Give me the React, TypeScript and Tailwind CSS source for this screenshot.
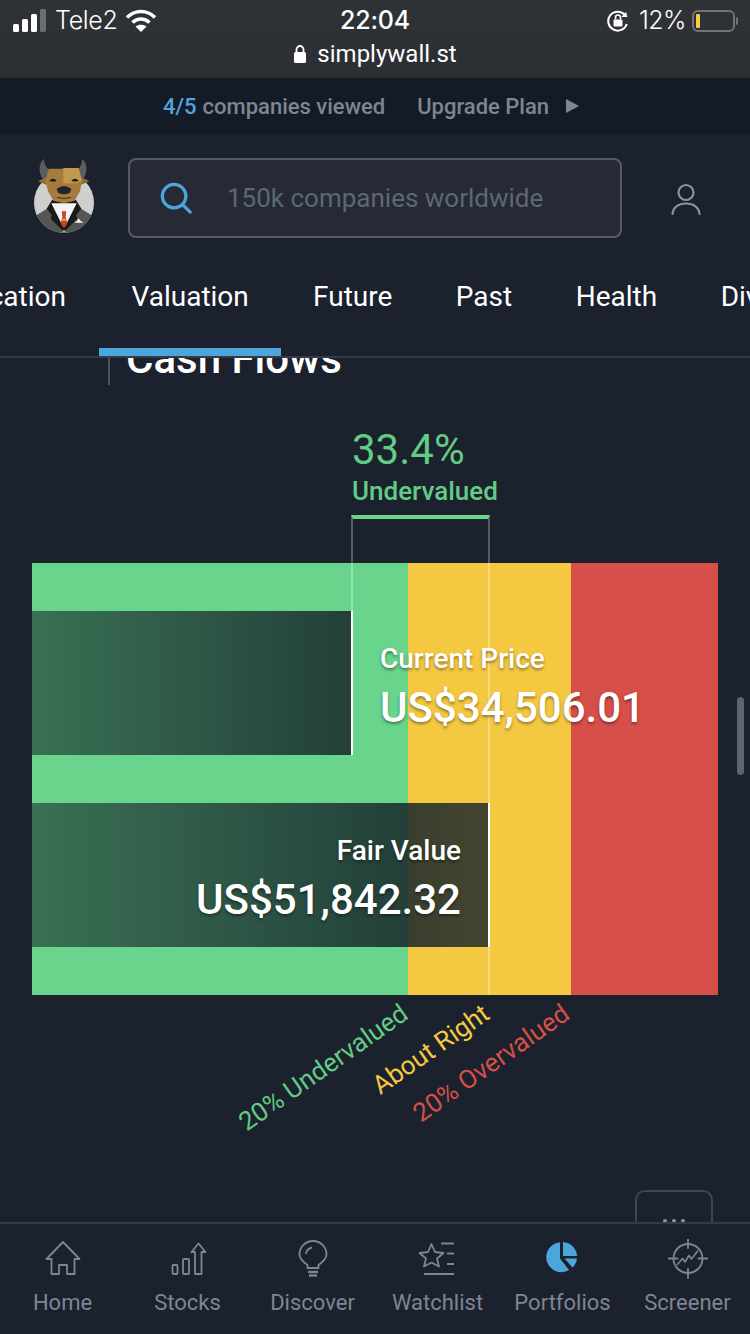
import type { ReactNode } from 'react'

const tabs = ['Valuation', 'Future', 'Past', 'Health', 'Dividend']

function BullLogo() {
  return (
    <svg viewBox="0 0 270 270" className="w-[90px] h-[90px] shrink-0">
      <defs>
        <clipPath id="disc">
          <circle cx="132" cy="158" r="90" />
        </clipPath>
      </defs>
      <circle cx="132" cy="158" r="90" fill="#cfcfcf" />
      <g clipPath="url(#disc)">
        <path d="M30 260 V208 L88 172 H176 L234 208 V260 Z" fill="#555555" />
        <path d="M96 150 L80 176 L96 196 L92 206 L130 244 L134 244 L172 206 L168 196 L184 176 L168 150 Z" fill="#1a1a1a" />
        <path d="M94 160 H170 L136 228 H128 Z" fill="#f4f4f4" />
        <path d="M125 184 H139 L137 200 L142 220 L132 234 L122 220 L127 200 Z" fill="#c8452b" />
        <path d="M126 206 H138 L139 212 H125 Z" fill="#e8a33a" />
        <path d="M163 218 L170 213 L176 205 L182 213 L192 218 Z" fill="#f2f2f2" />
        <circle cx="132" cy="244" r="4" fill="#a0a0a0" />
      </g>
      <path d="M72 26 C54 42 54 70 72 90 L92 62 C80 54 72 44 72 26 Z" fill="#5a5e62" />
      <path d="M186 26 C204 42 204 70 186 90 L168 62 C180 54 186 44 186 26 Z" fill="#5a5e62" />
      <path d="M54 94 L84 78 L92 110 Z" fill="#8f6c33" />
      <path d="M208 94 L178 78 L170 110 Z" fill="#8f6c33" />
      <path d="M86 56 H176 L186 92 L180 124 L164 152 L132 160 L100 152 L84 124 L76 92 Z" fill="#a47c3d" />
      <path d="M130 54 H176 L186 92 L168 100 H130 Z" fill="#c19a50" />
      <path d="M88 92 Q99 80 110 92 Q99 97 88 92 Z" fill="#1d1a16" />
      <path d="M154 92 Q165 80 176 92 Q165 97 154 92 Z" fill="#1d1a16" />
      <path d="M110 116 Q132 100 154 116 L150 128 Q132 138 114 128 Z" fill="#22242a" />
      <path d="M112 142 Q132 150 152 142" fill="none" stroke="#3a2a12" strokeWidth="3" />
    </svg>
  )
}

function SignalBars() {
  return (
    <svg width="36" height="24" viewBox="0 0 36 24">
      <rect x="0" y="15" width="6" height="8" rx="1.5" fill="#fff" />
      <rect x="9" y="10" width="6" height="13" rx="1.5" fill="#fff" />
      <rect x="18" y="5" width="6" height="18" rx="1.5" fill="#fff" />
      <rect x="27" y="0" width="6" height="23" rx="1.5" fill="#6a6d72" />
    </svg>
  )
}

function WifiGlyph() {
  return (
    <svg width="32" height="24" viewBox="0 0 32 24" fill="none" stroke="#fff" strokeWidth="3.6">
      <path d="M2 8.5 C10 0.5 22 0.5 30 8.5" />
      <path d="M7.5 13.5 C12.5 8.8 19.5 8.8 24.5 13.5" />
      <path d="M16 23 L10.5 17.5 C13.5 15 18.5 15 21.5 17.5 Z" fill="#fff" stroke="none" />
    </svg>
  )
}

function RotationLock() {
  return (
    <svg width="22" height="24" viewBox="0 0 22 24" fill="none">
      <path d="M18 6 A9.5 9.5 0 1 0 19.8 15" stroke="#fff" strokeWidth="2" />
      <path d="M20.5 8 L14.5 8 L19 3 Z" fill="#fff" />
      <rect x="6.5" y="10.5" width="9" height="7" rx="1" fill="#fff" />
      <path d="M8.5 10.5 V8.5 A2.5 2.5 0 0 1 13.5 8.5 V10.5" stroke="#fff" strokeWidth="1.6" />
    </svg>
  )
}

function Battery() {
  return (
    <div className="flex items-center gap-[1px]">
      <div className="w-[43px] h-[22px] rounded-[6px] border-2 border-[#70747a] p-[2px]">
        <div className="w-[4px] h-full rounded-[1px] bg-[#f5d13f]" />
      </div>
      <div className="w-[2px] h-[8px] rounded-r-full bg-[#70747a]" />
    </div>
  )
}

function LockGlyph() {
  return (
    <svg width="14" height="20" viewBox="0 0 14 20" fill="none">
      <rect x="1" y="8" width="12" height="11" rx="1.5" fill="#fff" />
      <path d="M3.5 8 V5.5 A3.5 3.5 0 0 1 10.5 5.5 V8" stroke="#fff" strokeWidth="1.8" />
    </svg>
  )
}

function SearchGlyph() {
  return (
    <svg width="34" height="34" viewBox="0 0 36 36" fill="none" stroke="#4ca6dc" strokeWidth="3.4" strokeLinecap="round">
      <circle cx="16" cy="16" r="12.5" />
      <path d="M25.5 25.5 L33 33" />
    </svg>
  )
}

function PersonGlyph() {
  return (
    <svg width="32" height="34" viewBox="0 0 32 34" fill="none" stroke="#8c929e" strokeWidth="2.2" strokeLinecap="round">
      <circle cx="16" cy="9.5" r="7.5" />
      <path d="M2.5 31 C3 24 9 20.5 16 20.5 C23 20.5 29 24 29.5 31" />
    </svg>
  )
}

const stroke = '#7e8694'

function NavIcon({ children }: { children: ReactNode }) {
  return (
    <svg width="40" height="40" viewBox="0 0 40 40" fill="none" stroke={stroke} strokeWidth="1.8" strokeLinejoin="round">
      {children}
    </svg>
  )
}

const navItems: { label: string; icon: ReactNode }[] = [
  {
    label: 'Home',
    icon: (
      <NavIcon>
        <path d="M20 3 L3.5 20 H8.5 V35 H16 V26 H24 V35 H31.5 V20 H36.5 Z" />
      </NavIcon>
    ),
  },
  {
    label: 'Stocks',
    icon: (
      <NavIcon>
        <rect x="4.5" y="26" width="5" height="9" rx="1" />
        <rect x="15" y="20" width="6" height="15" rx="1" />
        <path d="M27 35 V13 H23.5 L30.5 4.5 L37.5 13 H33.5 V35 Z" />
      </NavIcon>
    ),
  },
  {
    label: 'Discover',
    icon: (
      <NavIcon>
        <path d="M14.5 29 V26 C11 23.5 6.5 20 6.5 15.5 A13.5 13.5 0 0 1 33.5 15.5 C33.5 20 29 23.5 25.5 26 V29 Z" />
        <path d="M13 15 A7.5 7.5 0 0 1 19 8.5" />
        <path d="M15 33 H25" strokeWidth="2.4" />
        <path d="M16 36.5 H24" strokeWidth="2.4" />
      </NavIcon>
    ),
  },
  {
    label: 'Watchlist',
    icon: (
      <NavIcon>
        <path d="M13.5 5 L17 13 L25.5 14 L19 19.5 L21 27.5 L13.5 23.5 L6 27.5 L8 19.5 L1.5 14 L10 13 Z" />
        <path d="M23 4.5 H36 M29 14.5 H36 M29 25 H36 M6 35 H36" />
      </NavIcon>
    ),
  },
  {
    label: 'Portfolios',
    icon: (
      <svg width="40" height="40" viewBox="0 0 40 40" fill="#4ca6dc">
        <path d="M17 3.2 V19.5 L26 31 A15 15 0 1 1 17 3.2 Z" />
        <path d="M20 3 A15 15 0 0 1 34 17 H20 Z" />
        <path d="M21.5 19.5 H34 A15 15 0 0 1 29.5 28.5 Z" />
      </svg>
    ),
  },
  {
    label: 'Screener',
    icon: (
      <NavIcon>
        <circle cx="20" cy="19.5" r="14.5" />
        <path d="M20 0 V9 M20 30 V39 M0.5 19.5 H9.5 M30.5 19.5 H39.5" strokeLinecap="round" />
        <path d="M9 26 L14.5 19.5 L17 23 L21 16.5 L23.5 20 L30 11.5" strokeWidth="1.6" />
      </NavIcon>
    ),
  },
]

export default function App() {
  return (
    <div className="relative w-[750px] h-[1334px] overflow-hidden flex flex-col bg-[#1b212d] font-['Roboto',sans-serif]">
      {/* ios status + address */}
      <div className="h-[78px] shrink-0 bg-gradient-to-b from-[#2f3236] to-[#2b2f34] text-white">
        <div className="relative flex items-center justify-between h-[41px] pl-[13px] pr-[12px]">
          <div className="flex items-center gap-[6px]">
            <SignalBars />
            <span className="text-[25px] font-['Inter',sans-serif] font-light tracking-[-0.3px]">Tele2</span>
            <span className="ml-[1px]"><WifiGlyph /></span>
          </div>
          <span className="absolute left-0 right-0 text-center text-[25px] font-medium font-['Inter',sans-serif] tracking-[-0.2px]">22:04</span>
          <div className="flex items-center gap-[6px]">
            <RotationLock />
            <span className="ml-[4px] text-[25px] font-['Inter',sans-serif] font-light tracking-[-0.5px]">12%</span>
            <Battery />
          </div>
        </div>
        <div className="flex items-center justify-center gap-[10px] h-[26px] text-[24px]">
          <LockGlyph />
          <span>simplywall.st</span>
        </div>
      </div>

      {/* upgrade banner */}
      <div className="h-[56px] shrink-0 flex items-center justify-center bg-[#151b26] text-[22px] font-medium text-[#7e8694] pr-[8px]">
        <span className="text-[#4ca6dc]">4/5</span>
        <span className="ml-[6px]">companies viewed</span>
        <span className="ml-[32px]">Upgrade Plan</span>
        <span className="ml-[17px] w-0 h-0 border-y-[7px] border-y-transparent border-l-[13px] border-l-[#7e8694]" />
      </div>

      {/* logo + search */}
      <div className="h-[129px] shrink-0 flex items-start">
        <div className="ml-[20px] mt-[16px]">
          <BullLogo />
        </div>
        <div className="ml-[18px] mt-[24px] w-[494px] h-[80px] flex items-center rounded-lg border-2 border-[#545a66] bg-[#252a36] pl-[29px]">
          <SearchGlyph />
          <span className="ml-[34px] text-[26px] text-[#5f6674]">150k companies worldwide</span>
        </div>
        <div className="ml-[48px] mt-[49px]">
          <PersonGlyph />
        </div>
      </div>

      {/* section tabs */}
      <div className="h-[95px] shrink-0 flex overflow-hidden border-b-2 border-[#343a46] text-[28px] text-white">
        <div className="w-[99px] shrink-0 flex justify-end overflow-hidden">
          <span className="pt-[16px] pr-[33px] leading-[36px] shrink-0">Education</span>
        </div>
        {tabs.map((tab, i) => (
          <div
            key={tab}
            className={`h-[93px] shrink-0 pt-[16px] leading-[36px] border-b-[8px] ${
              i === 0 ? 'px-[32.5px] border-[#4ca6dc]' : 'px-[31.75px] border-transparent'
            }`}
          >
            {tab}
          </div>
        ))}
      </div>

      {/* scrolled content */}
      <div className="relative flex-1 overflow-hidden">
        <h2 className="ml-[108px] -mt-[25px] pl-[16px] border-l-2 border-[#4a505c] text-[42px] leading-[52px] font-medium text-white">
          Cash Flows
        </h2>

        <div className="ml-[352px] mt-[39px] text-[#62cb85]">
          <div className="text-[42px] leading-[51px]">33.4%</div>
          <div className="text-[26px] leading-[32px] font-medium">Undervalued</div>
        </div>
        <div className="ml-[351px] mt-[8px] w-[139px] h-[48px] border-t-4 border-x-2 border-t-[#68d48c] border-x-[#555b67]" />

        <div className="relative ml-[32px] w-[686px] h-[432px]">
          <div className="absolute inset-0 flex">
            <div className="w-[376px] bg-[#68d48c]" />
            <div className="w-[163px] bg-[#f5c842]" />
            <div className="w-[147px] bg-[#d64f48]" />
          </div>
          <div className="absolute left-[319px] top-0 h-[48px] w-[2px] bg-white/30" />
          <div className="absolute left-[456px] top-0 h-full w-[2px] bg-white/30" />

          <div className="relative flex flex-col gap-[48px] py-[48px] text-white [text-shadow:0_2px_3px_rgba(0,0,0,0.4)]">
            <div className="flex items-center h-[144px]">
              <div className="w-[321px] h-full bg-gradient-to-r from-[#17252a]/57 to-[#17252a]/85 border-r-2 border-white shrink-0" />
              <div className="ml-[27px] pt-[8px] shrink-0">
                <div className="text-[28px] leading-[36px] font-medium">Current Price</div>
                <div className="mt-[6px] text-[42px] leading-[50px] font-medium">US$34,506.01</div>
              </div>
            </div>
            <div className="w-[458px] h-[144px] flex flex-col items-end justify-center pt-[8px] pr-[27px] bg-gradient-to-r from-[#17252a]/57 via-[#17252a]/85 via-[82%] to-[#17252a]/80 border-r-2 border-white">
              <div className="text-[28px] leading-[36px] font-medium">Fair Value</div>
              <div className="mt-[6px] text-[42px] leading-[50px] font-medium">US$51,842.32</div>
            </div>
          </div>
        </div>

        {/* axis labels, rotated and hung from their tick */}
        <div className="absolute right-[354px] top-[640px] origin-top-right -rotate-[35deg] whitespace-nowrap text-[26px] leading-[30px] text-[#62cb85]">
          20% Undervalued
        </div>
        <div className="absolute right-[273px] top-[640px] origin-top-right -rotate-[35deg] whitespace-nowrap text-[26px] leading-[30px] text-[#f5c842]">
          About Right
        </div>
        <div className="absolute right-[192px] top-[640px] origin-top-right -rotate-[35deg] whitespace-nowrap text-[26px] leading-[30px] text-[#d64f48]">
          20% Overvalued
        </div>

        <div className="absolute left-[737px] top-[339px] w-[7px] h-[78px] rounded-full bg-[#5f6570]" />
        <div className="absolute left-[635px] top-[832px] w-[78px] h-[50px] rounded-t-[10px] border-2 border-[#3f4552] flex justify-center pt-[27px] gap-[5px]">
          <span className="w-[4px] h-[4px] rounded-full bg-[#8c929e]" />
          <span className="w-[4px] h-[4px] rounded-full bg-[#8c929e]" />
          <span className="w-[4px] h-[4px] rounded-full bg-[#8c929e]" />
        </div>
      </div>

      {/* bottom nav */}
      <nav className="h-[112px] shrink-0 grid grid-cols-6 border-t-2 border-[#343a46] bg-[#1b212d]">
        {navItems.map((item) => (
          <div key={item.label} className="flex flex-col items-center pt-[15px]">
            {item.icon}
            <span className="mt-[10px] text-[22px] leading-[28px] text-[#7e8694]">{item.label}</span>
          </div>
        ))}
      </nav>
    </div>
  )
}
